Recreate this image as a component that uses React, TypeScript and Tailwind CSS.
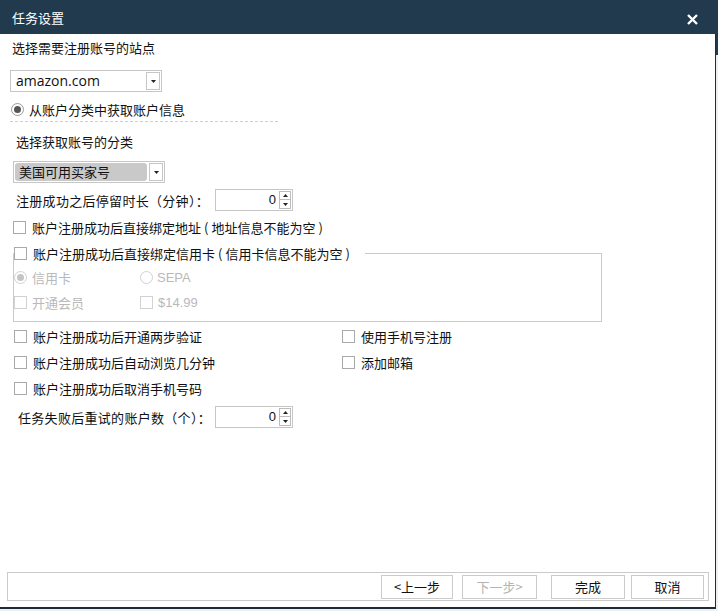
import React from "react";

const font = "font-['Noto_Sans_CJK_SC','Noto_Sans',sans-serif]";

// the original UI font has wider ascii brackets, pad them a little
function withParens(text: string) {
  return text.split(/([()])/).map((part, i) =>
    part === "(" || part === ")" ? (
      <span key={i} className="px-[3px]">
        {part}
      </span>
    ) : (
      part
    )
  );
}

function Box({ disabled, className = "" }: { disabled?: boolean; className?: string }) {
  return (
    <span
      className={`inline-block w-[13px] h-[13px] shrink-0 bg-white border ${
        disabled ? "border-[#d2d2d2]" : "border-[#a9a9a9]"
      } ${className}`}
    />
  );
}

function Radio({ disabled, checked }: { disabled?: boolean; checked?: boolean }) {
  return (
    <span
      className={`inline-flex items-center justify-center w-[13px] h-[13px] shrink-0 rounded-full bg-white border ${
        disabled ? "border-[#d2d2d2]" : "border-[#9a9a9a]"
      }`}
    >
      {checked && (
        <span className={`w-[7px] h-[7px] rounded-full ${disabled ? "bg-[#c4c4c4]" : "bg-[#555]"}`} />
      )}
    </span>
  );
}

function Arrow({ up, color = "#222" }: { up?: boolean; color?: string }) {
  return (
    <svg width="5" height="3" viewBox="0 0 5 3">
      <path d={up ? "M0 3 L2.5 0 L5 3 Z" : "M0 0 L5 0 L2.5 3 Z"} fill={color} />
    </svg>
  );
}

function Select({ value, selected, className = "" }: { value: string; selected?: boolean; className?: string }) {
  return (
    <div className={`flex items-center h-[22px] w-[152px] border border-[#c6c6c6] bg-white p-[1px] ${className}`}>
      {selected ? (
        <div className="flex-1 h-full flex items-center rounded-[3px] bg-[#c9c9c9] pl-[4px] text-[13px] text-[#111]">
          {value}
        </div>
      ) : (
        <div className="flex-1 pl-[4px] text-[14px] text-[#111] font-['Open_Sans',sans-serif] leading-none">
          {value}
        </div>
      )}
      <div className="ml-[2px] w-[14px] h-[18px] border border-[#c6c6c6] flex items-center justify-center">
        <Arrow />
      </div>
    </div>
  );
}

function Spinner() {
  return (
    <div className="flex items-center h-[22px] w-[78px] border border-[#c6c6c6] bg-white">
      <div className="flex-1 text-right pr-[3px] text-[13px] text-[#111] font-['Liberation_Sans',sans-serif]">0</div>
      <div className="flex flex-col mr-[1px]">
        <div className="w-[12px] h-[9px] border border-[#bcbcbc] flex items-center justify-center">
          <Arrow up />
        </div>
        <div className="w-[12px] h-[9px] border border-t-0 border-[#bcbcbc] flex items-center justify-center">
          <Arrow />
        </div>
      </div>
    </div>
  );
}

function Check({ label, className = "" }: { label: string; className?: string }) {
  return (
    <div className={`flex items-center h-[16px] ${className}`}>
      <Box />
      <span className="ml-[6px] text-[13px] text-[#111] leading-none">{withParens(label)}</span>
    </div>
  );
}

function Btn({ label, disabled, className = "" }: { label: string; disabled?: boolean; className?: string }) {
  return (
    <button
      className={`h-[24px] border border-[#cbcbcb] bg-white text-[13px] leading-none ${
        disabled ? "text-[#b4b4b4]" : "text-[#111]"
      } ${className}`}
    >
      {label}
    </button>
  );
}

export default function App() {
  return (
    <div className={`w-[718px] h-[611px] flex flex-col bg-[#eef1f3] overflow-hidden ${font}`}>
      {/* title bar */}
      <div className="h-[34px] shrink-0 bg-[#213a4d] flex items-center justify-between pl-[12px] pr-[20px]">
        <span className="text-white text-[13px] leading-none">任务设置</span>
        <svg width="11" height="11" viewBox="0 0 11 11" className="mt-[4px]">
          <path d="M1 1 L10 10 M10 1 L1 10" stroke="#fff" strokeWidth="2.4" />
        </svg>
      </div>

      <div className="flex">
        <div className="w-[716px] h-[575px] bg-white border-r border-b-2 border-[#1f2b36] flex flex-col">
          <div className="mt-[6px] ml-[12px] h-[16px] flex items-center text-[13px] text-[#111]">选择需要注册账号的站点</div>

          <Select value="amazon.com" className="mt-[14px] ml-[10px]" />

          <div className="mt-[9px] ml-[11px] h-[16px] flex items-center">
            <Radio checked />
            <span className="ml-[5px] text-[13px] text-[#111] leading-none">从账户分类中获取账户信息</span>
          </div>

          <div className="mt-[4px] ml-[10px] w-[268px] border-t border-dashed border-[#cfcfcf]" />

          <div className="mt-[12px] ml-[16px] h-[16px] flex items-center text-[13px] text-[#111]">选择获取账号的分类</div>

          <Select value="美国可用买家号" selected className="mt-[11px] ml-[13px]" />

          <div className="mt-[6px] ml-[16px] h-[22px] flex items-center">
            <span className="w-[199px] text-[13px] text-[#111] leading-none tracking-[0.3px]">注册成功之后停留时长（分钟）：</span>
            <Spinner />
          </div>

          <Check label="账户注册成功后直接绑定地址(地址信息不能为空)" className="mt-[8px] ml-[13px]" />

          <fieldset className="mt-[10px] ml-[13px] w-[589px] border border-[#cacaca] px-0 pb-[11px]">
            <legend className="pr-[12px] bg-white">
              <Check label="账户注册成功后直接绑定信用卡(信用卡信息不能为空)" />
            </legend>
            <div className="mt-[8px] flex h-[16px] items-center">
              <div className="w-[126px] flex items-center">
                <Radio checked disabled />
                <span className="ml-[5px] text-[13px] text-[#b9b9b9] leading-none">信用卡</span>
              </div>
              <div className="flex items-center">
                <Radio disabled />
                <span className="ml-[4px] text-[13px] text-[#b9b9b9] leading-none font-['Liberation_Sans',sans-serif]">SEPA</span>
              </div>
            </div>
            <div className="mt-[9px] flex h-[16px] items-center">
              <div className="w-[126px] flex items-center">
                <Box disabled />
                <span className="ml-[5px] text-[13px] text-[#b9b9b9] leading-none">开通会员</span>
              </div>
              <div className="flex items-center">
                <Box disabled />
                <span className="ml-[5px] text-[13px] text-[#b9b9b9] leading-none font-['Liberation_Sans',sans-serif]">$14.99</span>
              </div>
            </div>
          </fieldset>

          <div className="mt-[6px] ml-[14px] flex">
            <Check label="账户注册成功后开通两步验证" className="w-[328px]" />
            <Check label="使用手机号注册" />
          </div>
          <div className="mt-[10px] ml-[14px] flex">
            <Check label="账户注册成功后自动浏览几分钟" className="w-[328px]" />
            <Check label="添加邮箱" />
          </div>
          <Check label="账户注册成功后取消手机号码" className="mt-[10px] ml-[14px]" />

          <div className="mt-[10px] ml-[18px] h-[22px] flex items-center">
            <span className="w-[197px] text-[13px] text-[#111] leading-none tracking-[0.3px]">任务失败后重试的账户数（个）：</span>
            <Spinner />
          </div>

          {/* footer */}
          <div className="mt-auto mb-[6px] ml-[7px] w-[702px] h-[29px] border border-[#cbcbcb] flex items-center justify-end pr-[4px]">
            <Btn label="<上一步" className="w-[72px]" />
            <Btn label="下一步>" disabled className="ml-[9px] w-[75px]" />
            <Btn label="完成" className="ml-[14px] w-[74px]" />
            <Btn label="取消" className="ml-[6px] w-[73px]" />
          </div>
        </div>
        <div className="flex-1 flex flex-col">
          <div className="h-[21px] bg-[#213a4d]" />
        </div>
      </div>
    </div>
  );
}
